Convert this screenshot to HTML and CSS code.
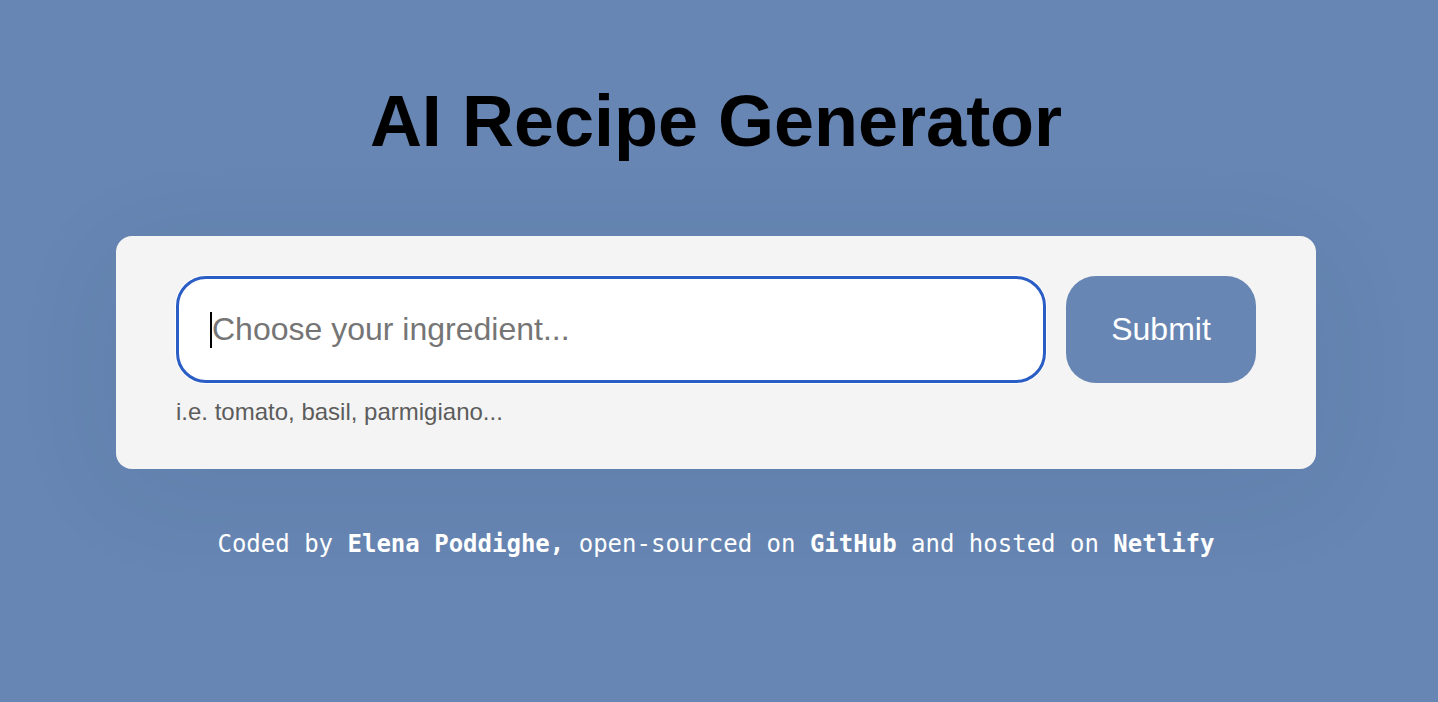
FILE: index.html
```html
<!DOCTYPE html>
<html lang="en">
<head>
<meta charset="utf-8">
<title>AI Recipe Generator</title>
<link rel="stylesheet" href="styles.css">
</head>
<body>
<div class="container">
  <header class="header">
    <h1 class="title">AI Recipe Generator</h1>
  </header>
  <div class="form-wrapper">
    <form class="search-form">
      <div class="row">
        <div class="input-wrap">
          <input class="ingredient-input" type="search" placeholder="Choose your ingredient..." autofocus>
        </div>
        <button class="submit-btn" type="submit">Submit</button>
      </div>
      <div class="hint">i.e. tomato, basil, parmigiano...</div>
    </form>
  </div>
  <footer class="footer">
    Coded by <strong>Elena Poddighe,</strong> open-sourced on <strong>GitHub</strong> and hosted on <strong>Netlify</strong>
  </footer>
</div>
</body>
</html>
```

FILE: styles.css
```css
html, body {
  margin: 0;
  padding: 0;
}
body {
  background: #6786b3;
  font-family: "Liberation Sans", Arial, sans-serif;
  min-height: 702px;
  padding-right: 6px;
}
.container {
  max-width: 1200px;
  margin: 0 auto;
  padding-top: 80px;
}
.header {
  text-align: center;
}
.title {
  margin: 0;
  font-size: 72px;
  font-weight: 700;
  color: #000;
  line-height: 83px;
}
.form-wrapper {
  margin-top: 73px;
  background: #f4f4f4;
  border-radius: 16px;
  padding: 40px 60px 43px;
  box-shadow: 0 20px 110px rgba(30, 45, 80, 0.08);
}
.row {
  display: flex;
  gap: 20px;
}
.input-wrap {
  flex: 0 0 870px;
  position: relative;
  display: flex;
}
.input-wrap::after {
  content: "";
  position: absolute;
  left: 34px;
  top: 36px;
  width: 2px;
  height: 36px;
  background: #000;
  pointer-events: none;
}
.ingredient-input {
  width: 100%;
  box-sizing: border-box;
  height: 107px;
  border: 3px solid #2a5ec5;
  border-radius: 30px;
  background: #fff;
  padding: 0 0 0 33px;
  font-family: "Liberation Sans", Arial, sans-serif;
  font-size: 32px;
  color: #222;
  outline: none;
  caret-color: transparent;
  box-shadow: 0 0 0 1px #fff;
  -webkit-appearance: none;
  appearance: none;
}
.ingredient-input::placeholder {
  color: #757575;
}
.submit-btn {
  flex: 0 0 190px;
  height: 107px;
  border: none;
  border-radius: 30px;
  background: #6786b3;
  color: #fff;
  font-family: "Liberation Sans", Arial, sans-serif;
  font-size: 32px;
  cursor: pointer;
}
.hint {
  margin-top: 15px;
  font-size: 24px;
  line-height: 28px;
  color: #5c5c5c;
}
.footer {
  margin-top: 61px;
  text-align: center;
  font-family: "DejaVu Sans Mono", monospace;
  font-size: 24px;
  line-height: 28px;
  color: #fff;
}
.footer strong {
  font-weight: 700;
}
```
